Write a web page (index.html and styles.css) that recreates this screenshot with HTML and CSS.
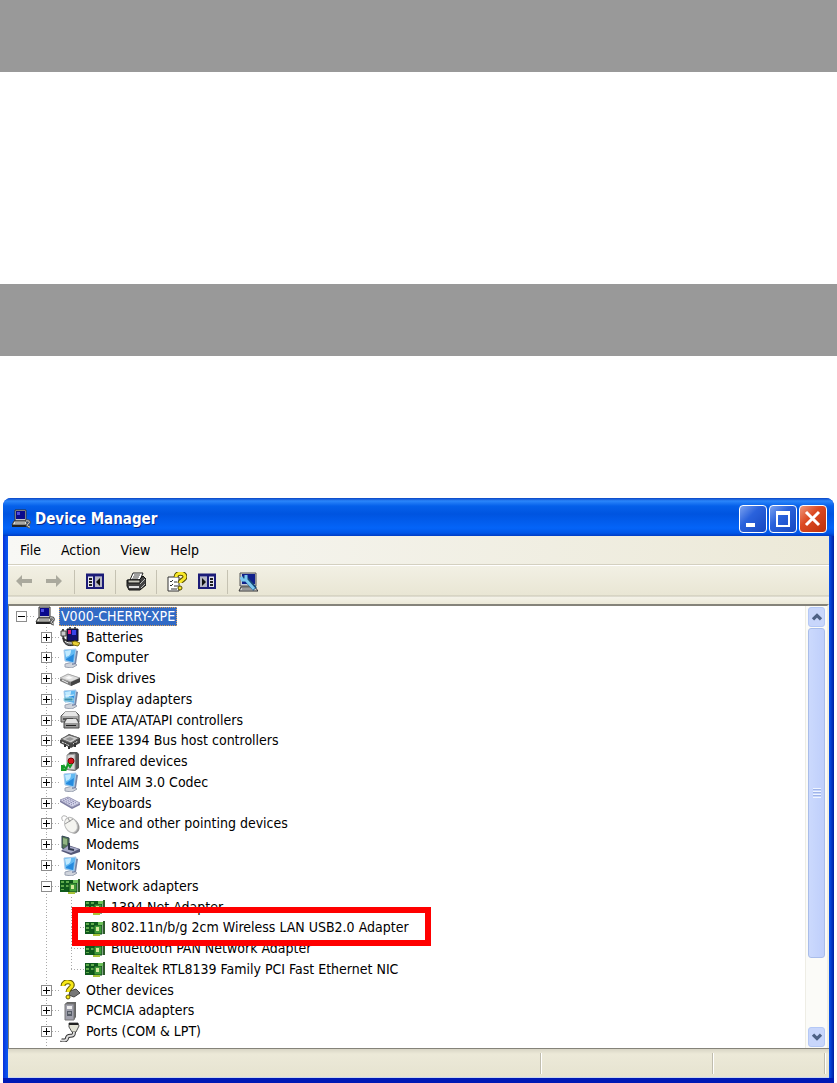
FILE: index.html
```html
<!DOCTYPE html>
<html lang="en">
<head>
    <meta charset="UTF-8">
    <meta name="viewport" content="width=device-width, initial-scale=1.0">
    <title>Device Manager</title>
    <link rel="stylesheet" href="styles.css">
</head>
<body>
    <svg class="sprites" aria-hidden="true">
        <symbol id="pc" viewBox="0 0 20 20">
            <path d="M4 1h11v11H4z" fill="#c8c8c8" stroke="#333"/>
            <path d="M5 2h9v8H5z" fill="#0a0a8c"/>
            <path d="M6 3h3v3H6z" fill="#4c4ce0"/>
            <path d="M3 12h12l2 4H1z" fill="#dcdcd4" stroke="#333"/>
            <path d="M1 17h15" stroke="#222" stroke-width="2"/>
            <path d="M4 14h10" stroke="#777"/>
            <path d="M15 12c4-1 4 2 2 3s0 3 2 3" fill="none" stroke="#555" stroke-width="3"/>
            <path d="M15 12c4-1 4 2 2 3s0 3 2 3" fill="none" stroke="#ddd"/>
        </symbol>
        <symbol id="battery" viewBox="0 0 20 20">
            <path d="M3 2v6c0 4 1 5 5 6" fill="none" stroke="#444" stroke-width="2"/>
            <path d="M1 4h5v5H1z" fill="#ccc" stroke="#444"/>
            <path d="M7 2h11v12H7z" fill="#10106c" stroke="#111"/>
            <path d="M8 3h3v4H8z" fill="#e0207c"/>
            <path d="M12 3h4v5h-4z" fill="#3944e8"/>
            <path d="M9 0h2v2H9zM14 0h2v2h-2z" fill="#555"/>
            <path d="M3 11c2 5 7 4 12 3l-1 4c-6 2-11-1-11-7z" fill="#666" stroke="#222"/>
            <path d="M5 14c2 2 4 2 7 2" fill="none" stroke="#eee"/>
            <path d="M12 15l3-1 5 2-2 3-5-1z" fill="#e9cf35" stroke="#7c6c0d"/>
        </symbol>
        <symbol id="monitor" viewBox="0 0 20 20">
            <path d="M5 16l8-2 4 3-5 3-7-1z" fill="#d0d4dc" stroke="#9aa2b2"/>
            <path d="M15 2l3 1-2 13-4 1z" fill="#7886a6"/>
            <path d="M4 2l12-1-2 14-9-2z" fill="#62b9f2" stroke="#a9c9e8"/>
            <path d="M5 3l6-1c0 5-2 6-5 7z" fill="#c2eaff"/>
            <path d="M6 11l8-5-1 8-7-2z" fill="#268ade"/>
        </symbol>
        <symbol id="disk" viewBox="0 0 20 20">
            <path d="M0 10l8-5 12 4v4l-9 4-11-5z" fill="#777"/>
            <path d="M0 9l8-4 12 4-9 4z" fill="#dedede" stroke="#aaa"/>
            <path d="M5 9l4-2 4 2-4 1z" fill="#fafafa"/>
            <path d="M11 13l9-4v4l-9 4z" fill="#444"/>
            <path d="M2 11l6 3" stroke="#eee"/>
        </symbol>
        <symbol id="display" viewBox="0 0 20 20">
            <use href="#monitor"/>
            <path d="M5 7l9-1M6 13l7 1" stroke="#dff5ff"/>
            <path d="M4 9h9v3H4z" fill="#3b8fae" stroke="#9fd6e6"/>
        </symbol>
        <symbol id="ide" viewBox="0 0 20 20">
            <path d="M5 2h11l3 3v7H1V6z" fill="#a7a7a7" stroke="#555"/>
            <path d="M5 2h11l2 4H2z" fill="#e6e6e6"/>
            <path d="M3 8h10v2H3z" fill="#555"/>
            <path d="M6 9h11l2 4v5H4v-5z" fill="#999" stroke="#444"/>
            <path d="M7 9h9l2 4H5z" fill="#e4e4e4"/>
            <path d="M6 15h10v1H6z" fill="#222"/>
        </symbol>
        <symbol id="firewire" viewBox="0 0 20 20">
            <path d="M0 9l9-6 11 4v5l-9 5-11-5z" fill="#444"/>
            <path d="M1 8l8-4 10 3-8 5z" fill="#ccc" stroke="#666"/>
            <path d="M5 8l5-2 4 2-4 2z" fill="#999"/>
            <path d="M2 11l8 4M13 13l5-3" stroke="#eee" stroke-dasharray="2 1"/>
            <path d="M5 13v3M9 15v3M15 12v4" stroke="#333" stroke-width="2"/>
        </symbol>
        <symbol id="infrared" viewBox="0 0 20 20">
            <path d="M7 3l3-3h7l2 2v14l-4 3-8-1z" fill="#555"/>
            <path d="M7 3l8-1v16l-8-1z" fill="#d8d8d8" stroke="#999"/>
            <circle cx="11" cy="9" r="3" fill="#d4141b" stroke="#700"/>
            <path d="M2 18l2-4 2 3 2-5 2 3 2-3" fill="none" stroke="#159c28" stroke-width="2"/>
            <path d="M2 13v5h4" fill="none" stroke="#159c28" stroke-width="2"/>
        </symbol>
        <symbol id="keyboard" viewBox="0 0 20 20">
            <path d="M0 7l9-3 11 6v2l-8 4L0 9z" fill="#7c7ca0"/>
            <path d="M0 7l8-3 12 6-8 4z" fill="#d4d4ea" stroke="#a1a1bc"/>
            <path d="M3 7l9 5M5 6l9 5M7 5l9 5" stroke="#8484ab" stroke-dasharray="2 1"/>
        </symbol>
        <symbol id="mouse" viewBox="0 0 20 20">
            <path d="M3 7C0 3 3 0 7 3" fill="none" stroke="#aaa"/>
            <ellipse cx="13" cy="12" rx="6" ry="8" transform="rotate(-28 13 12)" fill="#999"/>
            <ellipse cx="11" cy="11" rx="6" ry="8" transform="rotate(-28 11 11)" fill="#f4f4f0" stroke="#bbb"/>
            <path d="M5 10l8-5M8 4l2 4" fill="none" stroke="#999"/>
        </symbol>
        <symbol id="modem" viewBox="0 0 20 20">
            <path d="M2 1l7 2v12l-7-2z" fill="#557755" stroke="#345"/>
            <path d="M3 3l4 1v6l-4-1z" fill="#91b482"/>
            <path d="M1 16l7-6 12 4v3l-9 3z" fill="#555878"/>
            <path d="M2 15l6-4 11 3-8 4z" fill="#a8abc8"/>
            <path d="M9 8v6l5 1" fill="none" stroke="#313950" stroke-width="2"/>
        </symbol>
        <symbol id="nic" viewBox="0 0 20 20">
            <path d="M0 4h14v12H0z" fill="#0f5a1c"/>
            <path d="M1 5h3v2H1zM6 5h3v2H6zM1 9h3v2H1zM6 9h3v2H6zM1 13h3v1H1z" fill="#5faa4c"/>
            <path d="M9 7h8v9H9z" fill="#3f9a38" stroke="#0f4a18"/>
            <path d="M11 9h3v4h-3z" fill="#d4e89a"/>
            <path d="M13 4h5v3h-5z" fill="#6cc058"/>
            <path d="M19 3v13" stroke="#2e5b2c" stroke-width="2"/>
            <path d="M8 16h7v2H8z" fill="#a8c23a"/>
        </symbol>
        <symbol id="unknown" viewBox="0 0 20 20">
            <path d="M10 11l6-2 4 4-6 4-5-2z" fill="#777" stroke="#444"/>
            <path d="M3 6c0-6 11-5 9 0-1 2-4 3-4 6" fill="none" stroke="#655b00" stroke-width="5"/>
            <path d="M3 6c0-6 11-5 9 0-1 2-4 3-4 6" fill="none" stroke="#f7e817" stroke-width="3"/>
            <circle cx="8" cy="17" r="2" fill="#f7e817" stroke="#655b00"/>
        </symbol>
        <symbol id="pcmcia" viewBox="0 0 20 20">
            <path d="M5 3l2-2h9v15l-2 3H5z" fill="#666"/>
            <path d="M5 3h9v16H5z" fill="#a0a0ac" stroke="#777"/>
            <path d="M7 5h5v3H7z" fill="#eee"/>
            <path d="M7 10h5v5H7z" fill="#555b66"/>
            <path d="M8 12h3" stroke="#d4d4d4"/>
        </symbol>
        <symbol id="port" viewBox="0 0 20 20">
            <path d="M9 1h9l1 3-3 6h-4l-3-5z" fill="#e4e4d6" stroke="#555"/>
            <path d="M9 2h9" stroke="#222" stroke-width="2"/>
            <path d="M14 10c0 7-6 1-7 6 0 3-4 3-6 2" fill="none" stroke="#333" stroke-width="4"/>
            <path d="M14 10c0 7-6 1-7 6 0 3-4 3-6 2" fill="none" stroke="#ddd" stroke-width="2"/>
        </symbol>
        <symbol id="back" viewBox="0 0 20 20">
            <path d="M2 9l6-6v4h10v4H8v4z" fill="#aaa99d"/>
        </symbol>
        <symbol id="pane" viewBox="0 0 20 20">
            <path d="M2 3h16v13H2z" fill="#e4e4f0" stroke="#1c1c78" stroke-width="2"/>
            <path d="M1 3h18" stroke="#1c1c78" stroke-width="3"/>
            <path d="M9 5h8v10H9z" fill="#b8b8c4"/>
            <path d="M9 4v12" stroke="#1c1c78" stroke-width="2"/>
            <path d="M4 7h3M4 10h3M4 13h3" stroke="#222" stroke-width="2"/>
            <path d="M15 6v8l-4-4z" fill="#111"/>
        </symbol>
        <symbol id="printer" viewBox="0 0 20 20">
            <path d="M7 1h10l-3 7H4z" fill="#fff" stroke="#222"/>
            <path d="M8 3h6M7 5h6M6 7h6" stroke="#444"/>
            <path d="M1 8h12l4-4 3 3v6l-6 5H3l-2-4z" fill="#444" stroke="#111"/>
            <path d="M2 8h12v3H2z" fill="#c8c8bd" stroke="#111"/>
            <path d="M3 15h10" stroke="#ddd" stroke-width="2"/>
            <path d="M14 12l5-5M15 16l4-4" stroke="#bbb"/>
        </symbol>
        <symbol id="help" viewBox="0 0 20 20">
            <path d="M1 5h11v14H1z" fill="#fff" stroke="#333"/>
            <path d="M3 9l1 1 2-2M3 13l1 1 2-2M7 14h4M7 10h3M4 17h6" fill="none" stroke="#333"/>
            <path d="M9 5c0-5 9-5 9 0 0 3-5 3-5 6" fill="none" stroke="#554c00" stroke-width="5"/>
            <path d="M9 5c0-5 9-5 9 0 0 3-5 3-5 6" fill="none" stroke="#f8e829" stroke-width="3"/>
            <circle cx="13" cy="16" r="2" fill="#f8e829" stroke="#554c00"/>
        </symbol>
        <symbol id="scan" viewBox="0 0 20 20">
            <path d="M2 1h16v13H2z" fill="#c8ccd4" stroke="#555"/>
            <path d="M4 2h13v10H4z" fill="#10208c"/>
            <path d="M3 15h14l3 4H1z" fill="#ccc" stroke="#333"/>
            <path d="M4 17h12" stroke="#666"/>
            <path d="M4 7h4l9 10" fill="none" stroke="#174a78" stroke-width="5"/>
            <path d="M4 8h4l8 9M3 5l2 4M8 3v5" fill="none" stroke="#7cc8f0" stroke-width="3"/>
        </symbol>
        <symbol id="chevron" viewBox="0 0 20 20">
            <path d="M5 13l5-5 5 5" fill="none" stroke="#4d6185" stroke-width="4"/>
        </symbol>
    </svg>

    <div class="band"></div>
    <div class="band"></div>

    <main class="window">
        <header class="titlebar">
            <svg class="icon"><use href="#pc"/></svg>
            <h1>Device Manager</h1>
            <button class="caption" aria-label="Minimize"><svg viewBox="0 0 26 26"><path d="M6 17h9v4H6z" fill="#fff"/></svg></button>
            <button class="caption" aria-label="Maximize"><svg viewBox="0 0 26 26"><path d="M7 7h12v13H7z" fill="none" stroke="#fff" stroke-width="2"/><path d="M6 7h14" stroke="#fff" stroke-width="4"/></svg></button>
            <button class="caption close" aria-label="Close"><svg viewBox="0 0 26 26"><path d="M6 6l13 13M19 6L6 19" stroke="#fff" stroke-width="3"/></svg></button>
        </header>

        <nav class="menu">
            <button>File</button>
            <button>Action</button>
            <button>View</button>
            <button>Help</button>
        </nav>

        <div class="toolbar">
            <button aria-label="Back"><svg class="icon"><use href="#back"/></svg></button>
            <button aria-label="Forward"><svg class="icon flip"><use href="#back"/></svg></button>
            <span class="separator"></span>
            <button aria-label="Show tree"><svg class="icon"><use href="#pane"/></svg></button>
            <span class="separator"></span>
            <button aria-label="Print"><svg class="icon"><use href="#printer"/></svg></button>
            <span class="separator"></span>
            <button aria-label="Properties"><svg class="icon"><use href="#help"/></svg></button>
            <button aria-label="Show actions"><svg class="icon flip"><use href="#pane"/></svg></button>
            <span class="separator"></span>
            <button aria-label="Scan for changes"><svg class="icon"><use href="#scan"/></svg></button>
        </div>

        <section class="content">
            <ul class="tree">
                <li><span class="branch root"><button class="toggle minus" aria-label="Collapse"></button></span><svg class="icon"><use href="#pc"/></svg><span class="label selected">V000-CHERRY-XPE</span></li>
                <li><span class="indent"></span><span class="branch"><button class="toggle" aria-label="Expand"></button></span><svg class="icon"><use href="#battery"/></svg><span class="label">Batteries</span></li>
                <li><span class="indent"></span><span class="branch"><button class="toggle" aria-label="Expand"></button></span><svg class="icon"><use href="#monitor"/></svg><span class="label">Computer</span></li>
                <li><span class="indent"></span><span class="branch"><button class="toggle" aria-label="Expand"></button></span><svg class="icon"><use href="#disk"/></svg><span class="label">Disk drives</span></li>
                <li><span class="indent"></span><span class="branch"><button class="toggle" aria-label="Expand"></button></span><svg class="icon"><use href="#display"/></svg><span class="label">Display adapters</span></li>
                <li><span class="indent"></span><span class="branch"><button class="toggle" aria-label="Expand"></button></span><svg class="icon"><use href="#ide"/></svg><span class="label">IDE ATA/ATAPI controllers</span></li>
                <li><span class="indent"></span><span class="branch"><button class="toggle" aria-label="Expand"></button></span><svg class="icon"><use href="#firewire"/></svg><span class="label">IEEE 1394 Bus host controllers</span></li>
                <li><span class="indent"></span><span class="branch"><button class="toggle" aria-label="Expand"></button></span><svg class="icon"><use href="#infrared"/></svg><span class="label">Infrared devices</span></li>
                <li><span class="indent"></span><span class="branch"><button class="toggle" aria-label="Expand"></button></span><svg class="icon"><use href="#monitor"/></svg><span class="label">Intel AIM 3.0 Codec</span></li>
                <li><span class="indent"></span><span class="branch"><button class="toggle" aria-label="Expand"></button></span><svg class="icon"><use href="#keyboard"/></svg><span class="label">Keyboards</span></li>
                <li><span class="indent"></span><span class="branch"><button class="toggle" aria-label="Expand"></button></span><svg class="icon"><use href="#mouse"/></svg><span class="label">Mice and other pointing devices</span></li>
                <li><span class="indent"></span><span class="branch"><button class="toggle" aria-label="Expand"></button></span><svg class="icon"><use href="#modem"/></svg><span class="label">Modems</span></li>
                <li><span class="indent"></span><span class="branch"><button class="toggle" aria-label="Expand"></button></span><svg class="icon"><use href="#monitor"/></svg><span class="label">Monitors</span></li>
                <li><span class="indent"></span><span class="branch"><button class="toggle minus" aria-label="Collapse"></button></span><svg class="icon"><use href="#nic"/></svg><span class="label">Network adapters</span></li>
                <li><span class="indent"></span><span class="indent line"></span><span class="branch"></span><svg class="icon"><use href="#nic"/></svg><span class="label">1394 Net Adapter</span></li>
                <li class="marked"><span class="indent"></span><span class="indent line"></span><span class="branch"></span><svg class="icon"><use href="#nic"/></svg><span class="label">802.11n/b/g 2cm Wireless LAN USB2.0 Adapter</span></li>
                <li><span class="indent"></span><span class="indent line"></span><span class="branch"></span><svg class="icon"><use href="#nic"/></svg><span class="label">Bluetooth PAN Network Adapter</span></li>
                <li><span class="indent"></span><span class="indent line"></span><span class="branch last"></span><svg class="icon"><use href="#nic"/></svg><span class="label">Realtek RTL8139 Family PCI Fast Ethernet NIC</span></li>
                <li><span class="indent"></span><span class="branch"><button class="toggle" aria-label="Expand"></button></span><svg class="icon"><use href="#unknown"/></svg><span class="label">Other devices</span></li>
                <li><span class="indent"></span><span class="branch"><button class="toggle" aria-label="Expand"></button></span><svg class="icon"><use href="#pcmcia"/></svg><span class="label">PCMCIA adapters</span></li>
                <li><span class="indent"></span><span class="branch"><button class="toggle" aria-label="Expand"></button></span><svg class="icon"><use href="#port"/></svg><span class="label">Ports (COM &amp; LPT)</span></li>
            </ul>
            <div class="scrollbar">
                <button class="arrow" aria-label="Scroll up"><svg class="icon"><use href="#chevron"/></svg></button>
                <div class="track"><div class="thumb"><span class="grip"></span></div></div>
                <button class="arrow" aria-label="Scroll down"><svg class="icon down"><use href="#chevron"/></svg></button>
            </div>
        </section>

        <footer class="status">
            <span></span>
            <span></span>
            <span></span>
        </footer>
    </main>
</body>
</html>
```

FILE: styles.css
```css
* {
    box-sizing: border-box;
}

body {
    display: flex;
    flex-direction: column;
    min-height: 100vh;
    margin: 0;
    background-color: #fff;
    color: #000;
    font-family: 'DejaVu Sans Condensed', 'DejaVu Sans', sans-serif;
    font-size: 14px;
}

button {
    padding: 0;
    border: none;
    background: none;
    color: inherit;
    font: inherit;
}

.sprites {
    display: none;
}

.icon {
    display: block;
    flex: none;
    width: 20px;
    height: 20px;
}

.flip {
    transform: scaleX(-1);
}

.down {
    transform: scaleY(-1);
}

.band {
    flex: none;
    height: 72px;
    margin-bottom: 212px;
    background-color: #999;
}

.band + .band {
    margin-bottom: 142px;
}

/* window frame */
.window {
    display: flex;
    flex: 1;
    flex-direction: column;
    margin: 0 3px;
    padding: 0 5px 5px;
    border-radius: 8px 8px 0 0;
    background: linear-gradient(to right, #0831d9, #0a54ee 4px, #0a54ee calc(100% - 5px), #001ea0);
    box-shadow: inset 0 -5px #0019b5;
}

.titlebar {
    display: flex;
    align-items: center;
    gap: 2px;
    height: 38px;
    margin: 0 -5px;
    padding: 4px 7px 0 8px;
    border-radius: 8px 8px 0 0;
    background: linear-gradient(#0a45c4, #2b86fb 3px, #0560ea 8px, #0054e0 16px, #0464f8 30px, #0056e8 35px, #003dc4);
    color: #fff;
}

.titlebar h1 {
    flex: 1;
    margin: 0 0 0 2px;
    font-size: 15px;
    text-shadow: 1px 1px #0a2c8c;
}

.caption {
    width: 28px;
    height: 28px;
    border: 1px solid #fff;
    border-radius: 4px;
    background: linear-gradient(135deg, #7ba2f0, #2a62dc 40%, #1647c0);
}

.caption svg {
    display: block;
}

.caption.close {
    background: linear-gradient(135deg, #f0987c, #dc4a22 40%, #bd300c);
}

.menu {
    display: flex;
    align-items: center;
    gap: 20px;
    height: 29px;
    padding-left: 12px;
    border-bottom: 1px solid #d4d0c0;
    background: linear-gradient(to right, #f8f8f5, #ece9d8);
}

.toolbar {
    display: flex;
    align-items: center;
    gap: 10px;
    height: 39px;
    padding: 0 6px 6px;
    border-top: 1px solid #fff;
    background: linear-gradient(#f2f0e4, #e9e6d4 29px, #c6c3b3 30px, #f4f2e8 31px, #ece9d8);
}

.separator {
    width: 1px;
    height: 24px;
    background-color: #c5c2b2;
}

/* device tree */
.content {
    display: flex;
    flex: 1;
    border-top: 2px solid #85837a;
    border-left: 1px solid #85837a;
    border-right: 2px solid #f1efe2;
    background-color: #fff;
}

.tree {
    display: grid;
    flex: 1;
    grid-auto-rows: 1fr;
    margin: 0;
    padding: 0 0 6px;
    list-style: none;
    background: repeating-linear-gradient(#aaa 0 1px, transparent 1px 3px) 37px 100% / 1px 6px no-repeat;
}

.tree li {
    display: flex;
    position: relative;
    align-items: center;
    width: max-content;
}

.indent {
    width: 25px;
}

.branch,
.line {
    display: flex;
    align-items: center;
    justify-content: center;
    align-self: stretch;
    width: 25px;
    background: repeating-linear-gradient(#aaa 0 1px, transparent 1px 3px) 12px 0 / 1px 100% no-repeat;
}

.branch {
    margin-right: 1px;
    background:
        repeating-linear-gradient(#aaa 0 1px, transparent 1px 3px) 12px 0 / 1px 100% no-repeat,
        repeating-linear-gradient(to right, #aaa 0 1px, transparent 1px 3px) 12px 50% / 13px 1px no-repeat;
}

.branch.root {
    background: repeating-linear-gradient(to right, #aaa 0 1px, transparent 1px 3px) 12px 50% / 13px 1px no-repeat;
}

.branch.last {
    background-size: 1px 50%, 13px 1px;
}

.toggle {
    width: 11px;
    height: 11px;
    border: 1px solid #8d8d8d;
    background:
        linear-gradient(#000, #000) center / 7px 1px no-repeat,
        linear-gradient(#000, #000) center / 1px 7px no-repeat,
        #fff;
}

.toggle.minus {
    background: linear-gradient(#000, #000) center / 7px 1px no-repeat #fff;
}

.label {
    margin-left: 4px;
    padding: 0 2px;
    line-height: 19px;
    white-space: nowrap;
}

.selected {
    outline: 1px dotted #d9a05a;
    outline-offset: -1px;
    background-color: #316ac5;
    color: #fff;
}

.marked::after {
    content: '';
    position: absolute;
    z-index: 1;
    inset: -10px -20px -8px 63px;
    border: 6px solid #f00;
}

/* scrollbar */
.scrollbar {
    display: flex;
    flex-direction: column;
    width: 22px;
    padding: 1px 2px;
    border-left: 1px solid #eeede5;
    background-color: #fbfbf8;
}

.arrow {
    display: grid;
    place-items: center;
    height: 20px;
    border: 1px solid #b4c8f6;
    border-radius: 3px;
    background-color: #c8d6fb;
}

.arrow .icon {
    width: 16px;
    height: 16px;
}

.track {
    flex: 1;
    padding: 1px 0;
}

.thumb {
    display: grid;
    place-items: center;
    height: 83%;
    border: 1px solid #a9bdea;
    border-radius: 3px;
    background: linear-gradient(to right, #cbd9fd, #bfcffb);
}

.grip {
    width: 8px;
    height: 10px;
    background: repeating-linear-gradient(#eef4fe 0 1px, #9fb4e8 1px 2px, transparent 2px 3px);
}

.status {
    display: grid;
    grid-template-columns: 534fr 172fr 112fr;
    height: 30px;
    padding: 4px 3px 3px 0;
    border-top: 1px solid #85837a;
    border-bottom: 1px solid #c8d6f0;
    background: linear-gradient(#d8d5c5, #ece9d8 5px, #e6e3d0);
}

.status span {
    border-right: 1px solid #fff;
    box-shadow: inset -1px 0 #c0bdad;
}
```
